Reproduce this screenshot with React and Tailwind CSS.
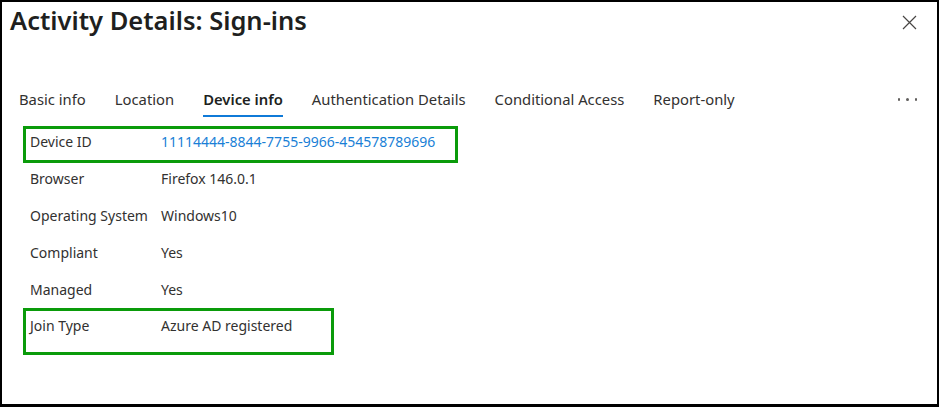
import React from 'react';

const tabs = ['Basic info', 'Location', 'Device info', 'Authentication Details', 'Conditional Access', 'Report-only'];

const rows = [
  { label: 'Device ID', value: '11114444-8844-7755-9966-454578789696', link: true, box: 'w-[435px] border-[#0a9b0a]' },
  { label: 'Browser', value: 'Firefox 146.0.1' },
  { label: 'Operating System', value: 'Windows10' },
  { label: 'Compliant', value: 'Yes' },
  { label: 'Managed', value: 'Yes' },
  { label: 'Join Type', value: 'Azure AD registered', box: 'w-[311px] border-[#0a9b0a]', last: true },
];

const App = () => {
  return (
    <div
      className="w-[939px] h-[407px] bg-white border-2 border-b-[3px] border-black overflow-hidden text-[#323130]"
      style={{ fontFamily: '"Noto Sans", "Open Sans", sans-serif' }}
    >
      {/* Header */}
      <div className="flex justify-between items-start">
        <h1 className="pl-[8px] pt-[1px] text-[25.5px] leading-[34px] font-semibold text-[#201f1e]">
          Activity Details: Sign-ins
        </h1>
        <button className="mt-[12px] mr-[20px] w-[16px] h-[16px] flex items-center justify-center">
          <svg width="15" height="15" viewBox="0 0 15 15">
            <path d="M1 1 L14 14 M14 1 L1 14" stroke="#484644" strokeWidth="1.2" fill="none" />
          </svg>
        </button>
      </div>

      {/* Tabs */}
      <div className="mt-[52px] flex items-start justify-between pr-[20px]">
        <div className="flex pl-[17px] gap-[29px]">
          {tabs.map((t) => (
            <div key={t} className="flex flex-col items-center">
              <span
                className={
                  'text-[14.8px] leading-[20px] whitespace-nowrap ' +
                  (t === 'Device info' ? 'font-semibold text-[#201f1e]' : 'text-[#323130]')
                }
              >
                {t}
              </span>
              <div className={'mt-[6px] h-[2px] w-full ' + (t === 'Device info' ? 'bg-[#0f7ad8]' : 'bg-transparent')} />
            </div>
          ))}
        </div>
        <div className="flex gap-[6px] pt-[9px]">
          <span className="w-[2.5px] h-[2.5px] rounded-full bg-[#605e5c]" />
          <span className="w-[2.5px] h-[2.5px] rounded-full bg-[#605e5c]" />
          <span className="w-[2.5px] h-[2.5px] rounded-full bg-[#605e5c]" />
        </div>
      </div>

      {/* Device info rows */}
      <div className="mt-[9px] pl-[21px] flex flex-col">
        {rows.map((r) => (
          <div
            key={r.label}
            className={
              'flex border-[3px] pl-[4px] text-[14px] leading-[20px] ' +
              (r.box ? r.box : 'border-transparent') +
              (r.last ? ' -mt-[3px] h-[47px] pt-[5px]' : ' h-[37px] pt-[3px]')
            }
          >
            <span className="w-[131px] shrink-0 whitespace-nowrap">{r.label}</span>
            <span className={'whitespace-nowrap ' + (r.link ? 'text-[#1a7fd6]' : '')}>{r.value}</span>
          </div>
        ))}
      </div>
    </div>
  );
};

export default App;
